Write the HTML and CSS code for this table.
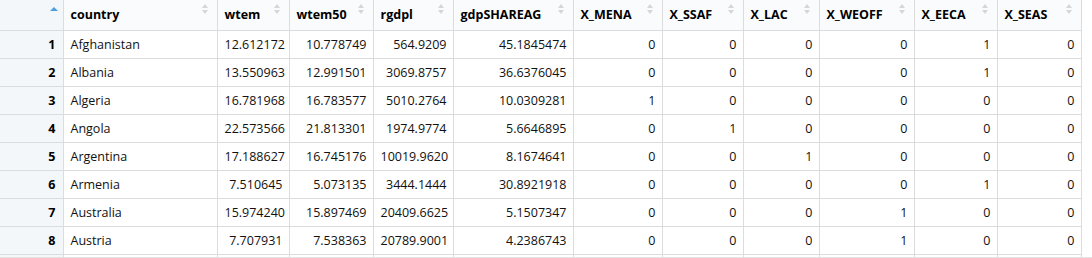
FILE: index.html
```html
<!DOCTYPE html>
<html lang="en">
<head>
    <meta charset="UTF-8">
    <title>Data viewer</title>
    <link rel="stylesheet" href="styles.css">
</head>
<body>
    <div class="viewer">
        <table class="grid">
            <colgroup>
                <col class="w-idx"><col class="w-country"><col class="w-wtem"><col class="w-wtem50">
                <col class="w-rgdpl"><col class="w-gdp"><col class="w-mena"><col class="w-ssaf">
                <col class="w-lac"><col class="w-weoff"><col class="w-eeca"><col class="w-seas">
            </colgroup>
            <thead>
                <tr>
                    <th class="idx"><span class="sort-active"></span></th>
                    <th>country<span class="sort"></span></th>
                    <th>wtem<span class="sort"></span></th>
                    <th>wtem50<span class="sort"></span></th>
                    <th>rgdpl<span class="sort"></span></th>
                    <th>gdpSHAREAG<span class="sort"></span></th>
                    <th>X_MENA<span class="sort"></span></th>
                    <th>X_SSAF<span class="sort"></span></th>
                    <th>X_LAC<span class="sort"></span></th>
                    <th>X_WEOFF<span class="sort"></span></th>
                    <th>X_EECA<span class="sort"></span></th>
                    <th>X_SEAS<span class="sort"></span></th>
                </tr>
            </thead>
            <tbody>
                <tr><td class="idx">1</td><td class="txt">Afghanistan</td><td>12.612172</td><td>10.778749</td><td>564.9209</td><td>45.1845474</td><td>0</td><td>0</td><td>0</td><td>0</td><td>1</td><td>0</td></tr>
                <tr><td class="idx">2</td><td class="txt">Albania</td><td>13.550963</td><td>12.991501</td><td>3069.8757</td><td>36.6376045</td><td>0</td><td>0</td><td>0</td><td>0</td><td>1</td><td>0</td></tr>
                <tr><td class="idx">3</td><td class="txt">Algeria</td><td>16.781968</td><td>16.783577</td><td>5010.2764</td><td>10.0309281</td><td>1</td><td>0</td><td>0</td><td>0</td><td>0</td><td>0</td></tr>
                <tr><td class="idx">4</td><td class="txt">Angola</td><td>22.573566</td><td>21.813301</td><td>1974.9774</td><td>5.6646895</td><td>0</td><td>1</td><td>0</td><td>0</td><td>0</td><td>0</td></tr>
                <tr><td class="idx">5</td><td class="txt">Argentina</td><td>17.188627</td><td>16.745176</td><td>10019.9620</td><td>8.1674641</td><td>0</td><td>0</td><td>1</td><td>0</td><td>0</td><td>0</td></tr>
                <tr><td class="idx">6</td><td class="txt">Armenia</td><td>7.510645</td><td>5.073135</td><td>3444.1444</td><td>30.8921918</td><td>0</td><td>0</td><td>0</td><td>0</td><td>1</td><td>0</td></tr>
                <tr><td class="idx">7</td><td class="txt">Australia</td><td>15.974240</td><td>15.897469</td><td>20409.6625</td><td>5.1507347</td><td>0</td><td>0</td><td>0</td><td>1</td><td>0</td><td>0</td></tr>
                <tr><td class="idx">8</td><td class="txt">Austria</td><td>7.707931</td><td>7.538363</td><td>20789.9001</td><td>4.2386743</td><td>0</td><td>0</td><td>0</td><td>1</td><td>0</td><td>0</td></tr>
                <tr class="peek"><td class="idx"></td><td></td><td></td><td></td><td></td><td></td><td></td><td></td><td></td><td></td><td></td><td></td></tr>
            </tbody>
        </table>
    </div>
</body>
</html>
```

FILE: styles.css
```css
* {
    margin: 0;
    padding: 0;
    box-sizing: border-box;
}

body {
    background: #ffffff;
    font-family: 'Open Sans', 'Noto Sans', Arial, sans-serif;
    font-size: 12.5px;
    color: #111111;
}

.viewer {
    height: 258px;
    overflow: hidden;
    border-bottom: 1px solid #e2e2e2;
}

.grid {
    table-layout: fixed;
    border-collapse: collapse;
    width: 1081px;
}

.w-idx { width: 63px; }
.w-country { width: 154px; }
.w-wtem { width: 72px; }
.w-wtem50 { width: 84px; }
.w-rgdpl { width: 80px; }
.w-gdp { width: 120px; }
.w-mena { width: 89px; }
.w-ssaf { width: 81px; }
.w-lac { width: 76px; }
.w-weoff { width: 95px; }
.w-eeca { width: 83px; }
.w-seas { width: 84px; }

.grid th,
.grid td {
    border: 1px solid #dcdcdc;
    white-space: nowrap;
    overflow: hidden;
}

.grid tr > :first-child {
    border-left: none;
}

.grid th {
    position: relative;
    height: 30px;
    border-top: none;
    padding: 0 7px;
    text-align: left;
    font-weight: 700;
    color: #000000;
    background: #fafbfc;
}

.grid td {
    height: 28px;
    padding: 0 6px 0 7px;
    text-align: right;
}

.grid td.txt {
    text-align: left;
}

.grid .idx {
    background: #f4f7f9;
    font-weight: 700;
    color: #000000;
    padding-right: 7px;
}

/* sort arrows in the header corner */
.sort {
    position: absolute;
    right: 8px;
    top: 4px;
    width: 7px;
    height: 10px;
}

.sort::before,
.sort::after {
    content: '';
    position: absolute;
    left: 0;
    border-left: 3.5px solid transparent;
    border-right: 3.5px solid transparent;
}

.sort::before {
    top: 0;
    border-bottom: 4px solid #d6d6d6;
}

.sort::after {
    bottom: 0;
    border-top: 4px solid #d6d6d6;
}

.sort-active {
    position: absolute;
    right: 5px;
    top: 7px;
    border-left: 4px solid transparent;
    border-right: 4px solid transparent;
    border-bottom: 4px solid #4a9fe2;
}
```
